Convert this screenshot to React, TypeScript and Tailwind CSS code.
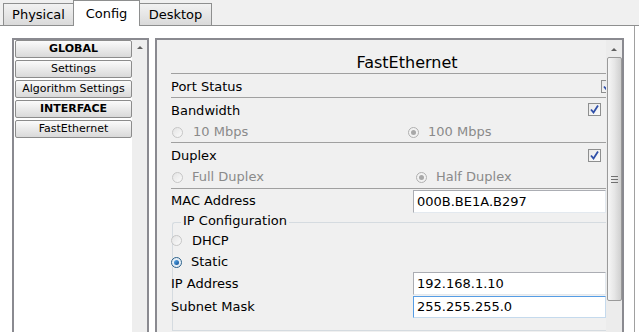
import React from 'react'

const font = { fontFamily: '"DejaVu Sans", Verdana, sans-serif' }

function Radio({ checked, active }: { checked?: boolean; active?: boolean }) {
  if (checked && active) {
    return (
      <span className="w-[11px] h-[11px] rounded-full border border-[#2c628b] bg-[#e6eef6] flex items-center justify-center shrink-0">
        <span className="w-[5px] h-[5px] rounded-full bg-gradient-to-br from-[#5fb0ef] to-[#0b4f94]" />
      </span>
    )
  }
  if (checked) {
    return (
      <span className="w-[11px] h-[11px] rounded-full border border-[#b0b0b0] bg-[#f2f2f2] flex items-center justify-center shrink-0">
        <span className="w-[5px] h-[5px] rounded-full bg-[#a8a8a8]" />
      </span>
    )
  }
  return <span className="w-[11px] h-[11px] rounded-full border border-[#c6c6c6] bg-gradient-to-br from-[#e4e4e4] to-[#fafafa] shrink-0" />
}

function Check() {
  return (
    <span className="w-[13px] h-[13px] border border-[#8e8f8f] bg-gradient-to-br from-[#e9e9e9] to-[#fbfbfb] flex items-center justify-center shrink-0">
      <svg width="9" height="9" viewBox="0 0 9 9">
        <path d="M1 4.5 L3.5 7.5 L8 0.5" fill="none" stroke="#2f4fa8" strokeWidth="1.8" />
      </svg>
    </span>
  )
}

function Arrow() {
  return <span className="w-0 h-0 border-l-[3px] border-r-[3px] border-b-[3px] border-l-transparent border-r-transparent border-b-[#606060]" />
}

function TextBox({ value, focused }: { value: string; focused?: boolean }) {
  return (
    <div
      className={`flex-1 h-full bg-white border flex items-center pl-[3px] text-[13px] text-black ${
        focused ? 'border-[#569de5] border-b-[#c5daed] border-r-[#c5daed]' : 'border-[#abadb3] border-b-[#e3e9ef] border-r-[#e3e9ef]'
      }`}
    >
      {value}
    </div>
  )
}

const navItems = [
  { label: 'GLOBAL', bold: true },
  { label: 'Settings' },
  { label: 'Algorithm Settings' },
  { label: 'INTERFACE', bold: true },
  { label: 'FastEthernet' },
]

export default function App() {
  return (
    <div className="w-[639px] h-[332px] overflow-hidden bg-white flex flex-col text-black" style={font}>
      {/* tab strip */}
      <div className="h-[26px] shrink-0 bg-[#f0f0f0] border-b border-[#8e8f8f] flex items-end pl-[3px] text-[13px]">
        <div className="h-[23px] w-[71px] -mb-px border border-[#8e8f8f] bg-gradient-to-b from-[#f2f2f2] to-[#dadada] flex items-center justify-center">
          Physical
        </div>
        <div className="h-[26px] w-[67px] -mb-px -ml-px border border-b-0 border-[#8e8f8f] bg-white flex items-start pt-[3px] justify-center relative z-10">
          Config
        </div>
        <div className="h-[23px] w-[73px] -mb-px -ml-px border border-[#8e8f8f] bg-gradient-to-b from-[#f2f2f2] to-[#dadada] flex items-center justify-center">
          Desktop
        </div>
      </div>

      {/* body */}
      <div className="flex-1 flex w-[635px] border-r border-[#a0a0a0] pt-[12px] pl-[12px] min-h-0">
        {/* left nav list */}
        <div className="w-[137px] h-[320px] shrink-0 border-2 border-b-0 border-[#8a8a90] bg-white flex">
          <div className="w-[118px] flex flex-col gap-[2px] pl-px">
            {navItems.map((n) => (
              <div
                key={n.label}
                className={`h-[18px] w-[117px] rounded-[2px] border border-[#8c8c8c] bg-gradient-to-b from-[#fbfbfb] to-[#d9d9d9] flex items-center justify-center text-[11px] ${
                  n.bold ? 'font-bold' : ''
                }`}
              >
                {n.label}
              </div>
            ))}
          </div>
          <div className="w-[15px] bg-[#eeeeee] flex justify-center pt-[6px]">
            <Arrow />
          </div>
        </div>

        {/* right config panel */}
        <div className="ml-[6px] w-[469px] h-[320px] shrink-0 border-2 border-b-0 border-[#8a8a90] bg-[#f0f0f0] flex">
          <div className="w-[449px] overflow-hidden pl-[14px] flex flex-col text-[13px]">
            <div className="h-[34px] shrink-0 border-b border-[#a0a0a0] pt-[13px] pl-[37px] flex justify-center text-[16px] leading-[20px]">
              FastEthernet
            </div>

            <div className="h-[24px] shrink-0 border-b border-[#a0a0a0] flex items-center pt-[3px]">
              <span>Port Status</span>
              <span className="ml-auto -mr-[8px] -mt-[2px]">
                <Check />
              </span>
            </div>

            <div className="h-[45px] shrink-0 border-b border-[#a0a0a0] flex flex-col">
              <div className="h-[22px] flex items-center pt-[3px]">
                <span>Bandwidth</span>
                <span className="ml-auto mr-[5px] -mt-[2px]">
                  <Check />
                </span>
              </div>
              <div className="h-[22px] flex items-center text-[#8a8a8a] pl-px pt-[2px]">
                <div className="w-[236px] flex items-center gap-[10px]">
                  <Radio />
                  <span>10 Mbps</span>
                </div>
                <div className="flex items-center gap-[9px]">
                  <Radio checked />
                  <span>100 Mbps</span>
                </div>
              </div>
            </div>

            <div className="h-[46px] shrink-0 border-b border-[#a0a0a0] flex flex-col">
              <div className="h-[23px] flex items-center pt-[2px]">
                <span>Duplex</span>
                <span className="ml-auto mr-[5px] -mt-[1px]">
                  <Check />
                </span>
              </div>
              <div className="h-[22px] flex items-center text-[#8a8a8a] pl-px">
                <div className="w-[244px] flex items-center gap-[9px]">
                  <Radio />
                  <span>Full Duplex</span>
                </div>
                <div className="flex items-center gap-[9px]">
                  <Radio checked />
                  <span>Half Duplex</span>
                </div>
              </div>
            </div>

            <div className="h-[24px] shrink-0 flex items-start pt-px">
              <span className="w-[242px] leading-[22px]">MAC Address</span>
              <div className="h-[23px] flex-1 flex">
                <TextBox value="000B.BE1A.B297" />
              </div>
            </div>

            <div className="mt-[9px] ml-px h-[109px] shrink-0 border-t border-l border-b border-[#d5dbe0] rounded-tl-[3px] flex flex-col">
              <div className="h-[16px] -mt-[10px] ml-[8px] px-[2px] bg-[#f0f0f0] self-start leading-[16px]">IP Configuration</div>
              <div className="-ml-[2px] h-[22px] flex items-center gap-[10px] pt-[1px]">
                <Radio />
                <span>DHCP</span>
              </div>
              <div className="-ml-[2px] h-[21px] flex items-center gap-[9px] pt-[1px]">
                <Radio checked active />
                <span>Static</span>
              </div>
              <div className="-ml-[2px] h-[24px] flex items-start">
                <span className="w-[242px] leading-[23px]">IP Address</span>
                <div className="h-[23px] flex-1 flex">
                  <TextBox value="192.168.1.10" />
                </div>
              </div>
              <div className="-ml-[2px] h-[23px] flex items-start">
                <span className="w-[242px] leading-[22px]">Subnet Mask</span>
                <div className="h-[22px] flex-1 flex">
                  <TextBox value="255.255.255.0" focused />
                </div>
              </div>
            </div>
          </div>

          {/* panel scrollbar */}
          <div className="w-[16px] bg-[#ececec] flex flex-col items-center pt-[8px]">
            <Arrow />
            <div className="mt-[6px] w-[15px] h-[244px] rounded-[2px] border border-[#9a9a9a] bg-gradient-to-r from-[#f6f6f6] via-[#e6e6e6] to-[#cfcfcf] flex flex-col items-center justify-center gap-[2px]">
              <span className="w-[7px] h-px bg-[#707070]" />
              <span className="w-[7px] h-px bg-[#707070]" />
              <span className="w-[7px] h-px bg-[#707070]" />
            </div>
          </div>
        </div>
      </div>
    </div>
  )
}
